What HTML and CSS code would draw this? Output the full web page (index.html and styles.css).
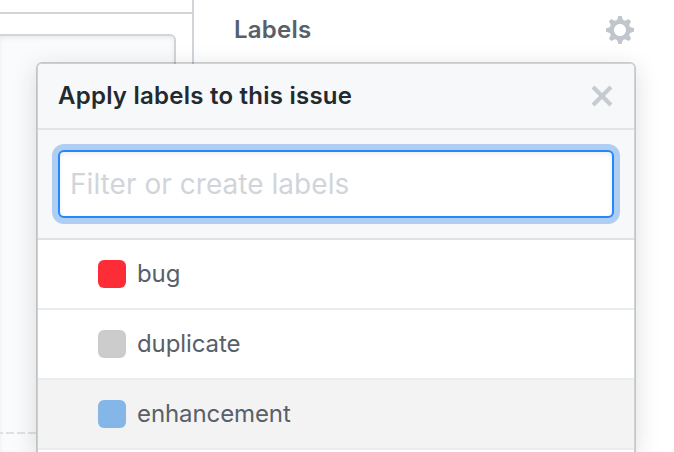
FILE: index.html
```html
<!DOCTYPE html>
<html lang="en">
<head>
<meta charset="utf-8">
<title>Labels</title>
<link rel="stylesheet" href="styles.css">
</head>
<body>
<div class="page">
  <main class="discussion">
    <div class="tab-line"></div>
    <div class="comment-box"><div class="drop-line"></div></div>
  </main>
  <aside class="sidebar">
    <h2 class="sidebar-title"><span>Labels</span></h2>
    <svg class="gear" viewBox="0 0 14 16" aria-hidden="true"><path fill-rule="evenodd" d="M14 8.77v-1.6l-1.94-.64-.45-1.09.88-1.84-1.13-1.13-1.81.91-1.09-.45-.69-1.92h-1.6l-.63 1.94-1.11.45-1.84-.88-1.13 1.13.91 1.81-.45 1.09L0 7.23v1.59l1.94.64.45 1.09-.88 1.84 1.13 1.13 1.81-.91 1.09.45.69 1.92h1.59l.63-1.94 1.11-.45 1.84.88 1.13-1.13-.92-1.81.47-1.09L14 8.75v.02zM7 11c-1.66 0-3-1.34-3-3s1.34-3 3-3 3 1.34 3 3-1.34 3-3 3z"/></svg>
  </aside>
</div>
<section class="menu">
  <header class="menu-header">
    <h3 class="menu-title"><span>Apply labels to this issue</span></h3>
    <svg class="close" viewBox="0 0 12 16" aria-hidden="true"><path d="M7.48 8l3.75 3.75-1.48 1.48L6 9.48l-3.75 3.75-1.48-1.48L4.52 8 .77 4.25l1.48-1.48L6 6.52l3.75-3.75 1.48 1.48L7.48 8z"/></svg>
  </header>
  <div class="filter">
    <input class="filter-input" type="text" placeholder="Filter or create labels">
  </div>
  <ul class="labels">
    <li class="label"><span class="swatch bug"></span><span class="name">bug</span></li>
    <li class="label"><span class="swatch duplicate"></span><span class="name">duplicate</span></li>
    <li class="label active"><span class="swatch enhancement"></span><span class="name">enhancement</span></li>
  </ul>
</section>
</body>
</html>
```
FILE: styles.css
```css
* { box-sizing: border-box; }
body {
  margin: 0;
  height: 452px;
  overflow: hidden;
  position: relative;
  background: #fff;
  font-family: Inter, "Liberation Sans", sans-serif;
}
h2, h3, ul { margin: 0; padding: 0; }
.page { display: flex; height: 452px; }
.discussion { width: 194px; border-right: 2px solid #d1d5da; }
.tab-line { height: 14px; border-bottom: 2px solid #d1d5da; }
.comment-box {
  width: 176px;
  height: 418px;
  margin-top: 20px;
  padding-top: 396px;
  border: 2px solid #d1d5da;
  border-left: 0;
  border-bottom: 0;
  border-radius: 0 6px 0 0;
  background: #fafbfc;
  box-shadow: inset 0 2px 4px rgba(27, 31, 35, .075);
}
.drop-line {
  height: 2px;
  background: repeating-linear-gradient(90deg, #dfe2e5 0 3px, transparent 3px 6px, #dfe2e5 6px 11px);
}
.sidebar {
  flex: 1;
  display: flex;
  justify-content: space-between;
  align-items: center;
  height: 60px;
  padding: 0 40px;
}
.sidebar-title { font-size: 24px; line-height: 36px; font-weight: 600; letter-spacing: .25px; color: #586069; }
.gear { width: 28px; height: 32px; fill: #c1c6cc; }
.menu {
  position: absolute;
  left: 36px;
  top: 62px;
  width: 600px;
  height: 390px;
  border: 2px solid rgba(27, 31, 35, .2);
  border-bottom: 0;
  border-radius: 6px 6px 0 0;
  background: #fff;
  background-clip: padding-box;
  box-shadow: 0 6px 24px rgba(27, 31, 35, .15);
}
.menu-header {
  display: flex;
  justify-content: space-between;
  align-items: center;
  height: 66px;
  padding: 0 20px;
  background: #f6f8fa;
  border-bottom: 2px solid #e1e4e8;
  border-radius: 4px 4px 0 0;
}
.menu-title { font-size: 24px; line-height: 36px; font-weight: 600; letter-spacing: .24px; color: #24292e; }
.close { width: 24px; height: 32px; fill: #c6cbd1; }
.filter { height: 110px; padding: 20px; background: #f6f8fa; border-bottom: 2px solid #dfe2e5; }
.filter-input {
  display: block;
  width: 556px;
  height: 68px;
  padding: 0 10px;
  border: 2px solid #2188ff;
  border-radius: 6px;
  outline: 0;
  background: #fff;
  font: 28px Inter, "Liberation Sans", sans-serif;
  letter-spacing: .04px;
  box-shadow: inset 0 2px 4px rgba(27, 31, 35, .075), 0 0 0 6px #b0cef1;
}
.filter-input::placeholder { color: #d1d5da; opacity: 1; }
.labels { list-style: none; }
.label {
  display: flex;
  align-items: center;
  gap: 11px;
  height: 70px;
  padding-left: 60px;
  border-bottom: 2px solid #eaecef;
  color: #586069;
  font-size: 24px;
  letter-spacing: -.1px;
}
.name { padding-bottom: 2px; }
.active { background: #f3f3f3; }
.swatch { width: 28px; height: 28px; border-radius: 6px; }
.bug { background: #fc2d36; }
.duplicate { background: #ccc; }
.enhancement { background: #84b6e8; }
```
